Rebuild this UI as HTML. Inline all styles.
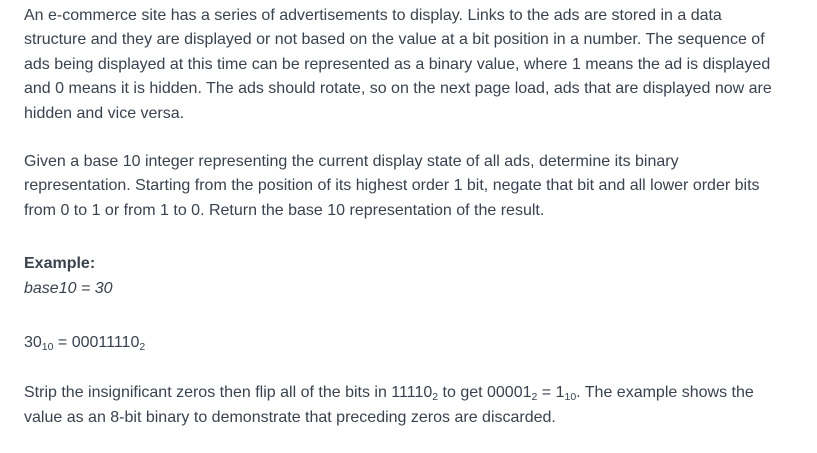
<!DOCTYPE html>
<html><head><meta charset="utf-8"><style>
html,body{margin:0;padding:0;background:#fff;width:817px;height:453px;overflow:hidden}
body{font-family:"Liberation Sans",sans-serif;font-size:16px;color:#39424e;line-height:24.4px}
.w{position:absolute;left:24px;top:4px;white-space:nowrap}
p{margin:0}
sub{font-size:10.5px;line-height:0;vertical-align:-3px}
</style></head><body><div class="w">
<p>An e-commerce site has a series of advertisements to display. Links to the ads are stored in a data<br>structure and they are displayed or not based on the value at a bit position in a number. The sequence of<br>ads being displayed at this time can be represented as a binary value, where 1 means the ad is displayed<br>and 0 means it is hidden. The ads should rotate, so on the next page load, ads that are displayed now are<br>hidden and vice versa.</p>
<p style="margin-top:24px">Given a base 10 integer representing the current display state of all ads, determine its binary<br>representation. Starting from the position of its highest order 1 bit, negate that bit and all lower order bits<br>from 0 to 1 or from 1 to 0. Return the base 10 representation of the result.</p>
<p style="margin-top:29px"><b>Example:</b><br><i>base10 = 30</i></p>
<p style="margin-top:30px">30<sub>10</sub> = 00011110<sub>2</sub></p>
<p style="margin-top:26px">Strip the insignificant zeros then flip all of the bits in 11110<sub>2</sub> to get 00001<sub>2</sub> = 1<sub>10</sub>. The example shows the<br>value as an 8-bit binary to demonstrate that preceding zeros are discarded.</p>
</div></body></html>
